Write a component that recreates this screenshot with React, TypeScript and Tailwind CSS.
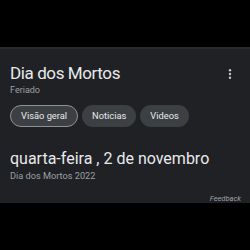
const tabs = ['Visão geral', 'Noticias', 'Videos'];

export default function App() {
    return (
        <div className="w-[250px] h-[250px] bg-black flex flex-col" style={{ fontFamily: 'Roboto, "Noto Sans", sans-serif' }}>
            <div className="h-[47px] shrink-0" />
            <div className="h-[156px] bg-[#202124] border-t-2 border-[#2a2b2e] flex flex-col px-[10px]">
                <div className="flex items-start justify-between mt-[14px]">
                    <h1 className="text-[17px] leading-[20px] tracking-[-0.4px] text-[#e8eaed]">Dia dos Mortos</h1>
                    <svg width="4" height="10" viewBox="0 0 4 10" className="mt-[6px] mr-[8px]" fill="#c4c7c5">
                        <circle cx="2" cy="1.3" r="1.2" />
                        <circle cx="2" cy="5" r="1.2" />
                        <circle cx="2" cy="8.7" r="1.2" />
                    </svg>
                </div>
                <div className="text-[9px] leading-[12px] text-[#9aa0a6] mt-[1px]">Feriado</div>
                <div className="flex gap-[4px] mt-[9px]">
                    {tabs.map((t, i) => (
                        <div
                            key={t}
                            className={`h-[22px] px-[10px] rounded-full flex items-center text-[9.3px] text-[#e8eaed] bg-[#3c4043] ${i === 0 ? 'border border-[#8e9195]' : ''}`}
                        >
                            {t}
                        </div>
                    ))}
                </div>
                <div className="text-[16px] leading-[20px] text-[#e8eaed] mt-[22px]">quarta-feira , 2 de novembro</div>
                <div className="text-[9.2px] leading-[11px] text-[#9aa0a6] mt-[1px]">Dia dos Mortos 2022</div>
                <div className="text-[7.5px] leading-[9px] italic text-[#9aa0a6] text-right mt-auto -mr-[1px]">Feedback</div>
            </div>
        </div>
    );
}
